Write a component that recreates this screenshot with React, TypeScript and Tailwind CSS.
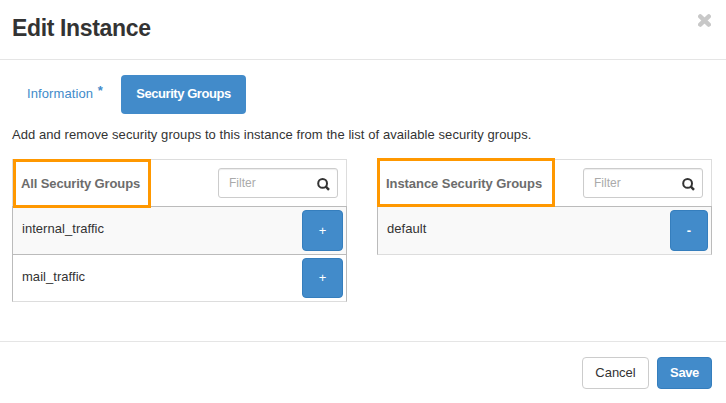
import React from "react";

function SearchIcon() {
  return (
    <svg width="13" height="13" viewBox="0 0 13 13" fill="none" stroke="#333" className="relative left-px top-px shrink-0">
      <circle cx="5.6" cy="5.4" r="4.4" strokeWidth="2" />
      <path d="M8.6 8.4 L12 11.8" strokeWidth="2.5" />
    </svg>
  );
}

interface GroupTableProps {
  title: string;
  titleClass: string;
  highlightClass: string;
  groups: { name: string; rowClass: string; buttonClass: string }[];
  action: string;
}

function GroupTable({ title, titleClass, highlightClass, groups, action }: GroupTableProps) {
  return (
    <section className="relative w-[335px] border border-b-0 border-[#ddd]">
      <div className="flex h-[46px] items-center justify-between pl-2 pr-2">
        <h2 className={`pt-[2px] text-[13px] font-bold text-[#6c6c6c] ${titleClass}`}>{title}</h2>
        <div className="flex h-[30px] w-[120px] items-center justify-between rounded-[3px] border border-[#ccc] pl-[10px] pr-2 shadow-[inset_0_1px_1px_rgba(0,0,0,0.075)]">
          <span className="text-[12px] text-[#aaa]">Filter</span>
          <SearchIcon />
        </div>
      </div>
      <ul className="-mx-px">
        {groups.map(({ name, rowClass, buttonClass }) => (
          <li
            key={name}
            className={`flex justify-between border-x border-t border-[#bbb] pl-[9px] pr-[3px] pt-[3px] odd:bg-[#f9f9f9] last:border-b last:border-b-[#ddd] ${rowClass}`}
          >
            <span className="pt-[10px] text-[13px] leading-[18px] tracking-[0.04px]">{name}</span>
            <button className={`rounded-[4px] border border-[#357ebd] bg-[#428bca] text-[13px] text-white ${buttonClass}`}>
              {action}
            </button>
          </li>
        ))}
      </ul>
      <div className={`pointer-events-none absolute border-[3px] border-[#ff9800] ${highlightClass}`} />
    </section>
  );
}

export default function App() {
  return (
    <div className="h-[403px] w-[726px] overflow-hidden bg-white font-['Liberation_Sans',Arial,sans-serif] text-[#333]">
      <header className="flex h-[60px] justify-between border-b border-[#e5e5e5] pl-3 pr-[15px]">
        <h1 className="pt-[14px] text-[23px] font-bold leading-7 tracking-[-0.35px]">Edit Instance</h1>
        <svg width="13" height="13" viewBox="0 0 13 13" className="mt-[14px]" stroke="#c8c8c8" strokeWidth="4.4" strokeLinecap="round">
          <path d="M2.2 2.4 L10.8 10.6 M10.8 2.4 L2.2 10.6" />
        </svg>
      </header>
      <main className="h-[281px] px-3 pt-[15px]">
        <nav className="flex h-[39px] text-[13px]">
          <span className="w-[109px] pl-[15px] pt-[10px] leading-[18px] tracking-[0.1px] text-[#428bca]">
            Information <span className="relative -top-[3px] left-px font-bold">*</span>
          </span>
          <span className="w-[125px] rounded-[4px] bg-[#428bca] pt-[10px] text-center font-bold leading-[18px] tracking-[-0.45px] text-white">
            Security Groups
          </span>
        </nav>
        <p className="mt-[12px] whitespace-nowrap text-[13px] leading-[18px] tracking-[0.07px]">
          Add and remove security groups to this instance from the list of available security groups.
        </p>
        <div className="mt-[15px] flex items-start gap-[30px]">
          <GroupTable
            title="All Security Groups"
            titleClass="tracking-[-0.12px]"
            highlightClass="left-0 -top-px h-[49px] w-[138px]"
            groups={[
              { name: "internal_traffic", rowClass: "h-12", buttonClass: "h-[41px] w-[41px]" },
              { name: "mail_traffic", rowClass: "h-12", buttonClass: "h-10 w-[41px]" },
            ]}
            action="+"
          />
          <GroupTable
            title="Instance Security Groups"
            titleClass="tracking-[-0.06px]"
            highlightClass="-left-px -top-[2px] h-[49px] w-[178px]"
            groups={[{ name: "default", rowClass: "h-[49px]", buttonClass: "h-[41px] w-[38px] font-bold" }]}
            action="-"
          />
        </div>
      </main>
      <footer className="flex h-[62px] justify-end gap-2 border-t border-[#e5e5e5] pr-[14px] pt-[15px] text-[13px]">
        <button className="h-8 w-[67px] rounded-[4px] border border-[#ccc] bg-white">Cancel</button>
        <button className="h-8 w-[55px] rounded-[4px] border border-[#357ebd] bg-[#428bca] font-bold tracking-[-0.4px] text-white">Save</button>
      </footer>
    </div>
  );
}
